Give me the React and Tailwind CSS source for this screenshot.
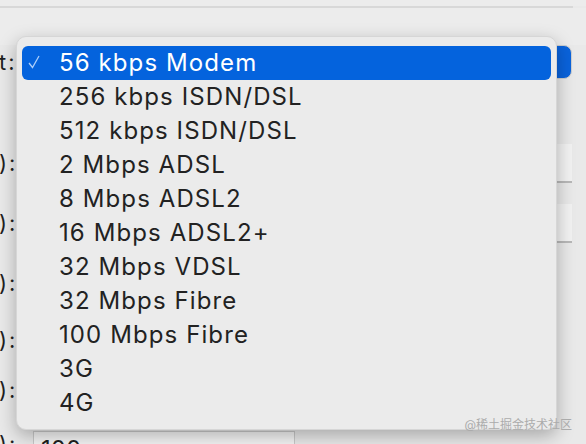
import React from "react";

const items = [
  "56 kbps Modem",
  "256 kbps ISDN/DSL",
  "512 kbps ISDN/DSL",
  "2 Mbps ADSL",
  "8 Mbps ADSL2",
  "16 Mbps ADSL2+",
  "32 Mbps VDSL",
  "32 Mbps Fibre",
  "100 Mbps Fibre",
  "3G",
  "4G",
];

function Label({ children }) {
  return (
    <div className="w-[16px] shrink-0 text-[22px] leading-none text-[#1f1f1f] tracking-[2px] -ml-[1px]">
      {children}
    </div>
  );
}

export default function App() {
  return (
    <div
      className="relative w-[586px] h-[444px] overflow-hidden bg-[#e9e9e9]"
      style={{ fontFamily: 'Inter, "Liberation Sans", Arial, "Noto Sans CJK SC", sans-serif' }}
    >
      {/* underlying window content */}
      <div className="flex flex-col">
        <div className="h-[6px] bg-[#ececec]" />
        <div className="h-[2px] w-[573px] bg-[#d8d8d8]" />
        <div className="h-[37px] bg-[#ececec]" />
        <div className="flex items-center h-[34px]">
          <Label>t:</Label>
          <div className="ml-auto mr-[14px] w-[40px] h-[34px] rounded-[8px] bg-[#0a63dc] border border-[#cfcfcf]" />
        </div>
        <div className="h-[65px]" />
        <div className="flex items-center h-[38px]">
          <Label>):</Label>
          <div className="ml-auto mr-[14px] w-[40px] h-[39px] bg-[#f2f2f2] border-b-2 border-[#b8b8b8]" />
        </div>
        <div className="h-[22px]" />
        <div className="flex items-center h-[38px]">
          <Label>):</Label>
          <div className="ml-auto mr-[14px] w-[40px] h-[39px] bg-[#f2f2f2] border-b-2 border-[#b8b8b8]" />
        </div>
        <div className="h-[22px]" />
        <div className="flex items-center h-[38px]">
          <Label>):</Label>
        </div>
        <div className="h-[19px]" />
        <div className="flex items-center h-[38px]">
          <Label>):</Label>
        </div>
        <div className="h-[12px]" />
        <div className="flex items-center h-[38px]">
          <Label>):</Label>
        </div>
        <div className="h-[16px]" />
        <div className="flex items-start h-[40px]">
          <div className="pt-[8px]">
            <Label>):</Label>
          </div>
          <div className="mt-[6px] ml-[18px] w-[262px] h-[34px] bg-[#f4f4f4] border border-[#c9c9c9] pl-[7px] pt-[6px] text-[24px] leading-none text-[#1f1f1f]">
            100
          </div>
        </div>
      </div>

      {/* open popup menu */}
      <div className="absolute left-[16px] top-[36px] w-[541px] h-[394px] rounded-[10px] bg-[#ebebeb] border border-[#d6d6d6] shadow-[0_6px_18px_rgba(0,0,0,0.28)] px-[5px] pt-[9px]">
        {items.map((t, i) => (
          <div
            key={t}
            className={
              "relative h-[34px] flex items-center pl-[37px] text-[24px] leading-none tracking-[1.1px] " +
              (i === 0 ? "bg-[#0463dd] rounded-[6px] text-white" : "text-[#222222]")
            }
          >
            {i === 0 && (
              <svg className="absolute left-[6px] top-[9px]" width="12" height="14" viewBox="0 0 12 14">
                <path d="M1 8 L4.5 12.5 L11 1" fill="none" stroke="rgba(200,225,255,0.85)" strokeWidth="1.3" />
              </svg>
            )}
            {t}
          </div>
        ))}
      </div>

      <div className="absolute right-[14px] top-[416px] text-[12px] text-[#ababab]">
        @稀土掘金技术社区
      </div>
    </div>
  );
}
